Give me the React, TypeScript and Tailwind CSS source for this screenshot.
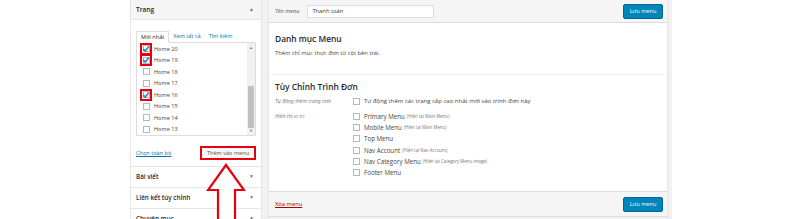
import React from 'react';

const Check = ({ checked }: { checked?: boolean }) => (
  <span className="relative flex h-[7px] w-[7px] shrink-0 items-center justify-center border border-[#b4b9be] bg-white">
    {checked && (
      <svg viewBox="0 0 10 10" className="absolute h-[8px] w-[8px]">
        <path d="M1.5 5.2 L4 7.6 L8.6 2" fill="none" stroke="#1e8cbe" strokeWidth="2" />
      </svg>
    )}
  </span>
);

const pages = [
  { name: 'Home 20', checked: true },
  { name: 'Home 19', checked: true },
  { name: 'Home 18' },
  { name: 'Home 17' },
  { name: 'Home 16', checked: true },
  { name: 'Home 15' },
  { name: 'Home 14' },
  { name: 'Home 13' },
];

const locations = [
  { name: 'Primary Menu', note: '(Hiện tại Main Menu)' },
  { name: 'Mobile Menu', note: '(Hiện tại Main Menu)' },
  { name: 'Top Menu' },
  { name: 'Nav Account', note: '(Hiện tại Nav Account)' },
  { name: 'Nav Category Menu', note: '(Hiện tại Category Menu image)' },
  { name: 'Footer Menu' },
];

const Caret = ({ up }: { up?: boolean }) => (
  <span className="text-[5px] text-[#72777c]">{up ? '▲' : '▼'}</span>
);

const LeftPanel = () => (
  <div className="relative flex h-[219px] w-[132px] shrink-0 flex-col overflow-hidden border-x border-[#e5e5e5] bg-white">
    <div className="flex h-[20px] shrink-0 items-center justify-between border-b border-[#e5e5e5] bg-[#f5f5f5] pl-[5px] pr-[7px]">
      <span className="text-[6.5px] font-semibold text-[#23282d]">Trang</span>
      <Caret up />
    </div>
    <div className="flex shrink-0 flex-col px-[5px] pt-[10px]">
      <div className="flex h-[12px] items-end text-[5.6px]">
        <span className="relative z-10 -mb-px flex h-[12px] items-center border border-b-white border-[#dddddd] bg-white px-[4px] text-[#23282d]">
          Mới nhất
        </span>
        <span className="ml-[4px] flex h-[12px] items-center text-[#0073aa]">Xem tất cả</span>
        <span className="ml-[8px] flex h-[12px] items-center text-[#0073aa]">Tìm kiếm</span>
      </div>
      <div className="flex h-[94px] border border-[#dddddd] bg-white">
        <div className="flex flex-1 flex-col">
          {pages.map((p) => (
            <div key={p.name} className="flex h-[11.5px] items-center pl-[6px]">
              <span className={p.checked ? 'relative flex h-[12px] w-[12px] -ml-[3px] items-center justify-center border-2 border-[#e8000b]' : 'flex h-[12px] w-[12px] -ml-[3px] items-center justify-center'}>
                <Check checked={p.checked} />
              </span>
              <span className="ml-[2px] text-[5.6px] text-[#444]">{p.name}</span>
            </div>
          ))}
        </div>
        <div className="flex w-[8px] flex-col items-center bg-[#f1f1f1]">
          <span className="mt-[2px] text-[4px] text-[#777]">▲</span>
          <div className="flex-1" />
          <div className="h-[42px] w-[6px] bg-[#c1c1c1]" />
          <span className="mb-[1px] text-[4px] text-[#777]">▼</span>
        </div>
      </div>
      <div className="mt-[10px] flex h-[14px] items-center justify-between">
        <span className="text-[5.6px] text-[#0073aa] underline">Chọn toàn bộ</span>
        <span className="flex h-[14px] w-[56px] items-center justify-center border-2 border-[#e8000b] bg-[#f7f7f7] text-[5.6px] text-[#555]">
          Thêm vào menu
        </span>
      </div>
    </div>
    <div className="mt-[6px] shrink-0 border-t border-[#e5e5e5]" />
    {['Bài viết', 'Liên kết tùy chỉnh', 'Chuyên mục'].map((t) => (
      <div key={t} className="flex h-[21px] shrink-0 items-center justify-between border-b border-[#e5e5e5] pl-[5px] pr-[7px]">
        <span className="text-[6.3px] font-semibold text-[#23282d]">{t}</span>
        <Caret />
      </div>
    ))}
    <svg className="absolute left-[75px] top-[163px] h-[60px] w-[40px]" viewBox="0 0 40 60">
      <path d="M20 2 L38 27 L29 27 L29 62 L12 62 L12 27 L2 27 Z" fill="white" stroke="#e8000b" strokeWidth="2.2" strokeLinejoin="miter" />
    </svg>
  </div>
);

const BlueButton = () => (
  <span className="flex h-[15px] w-[40px] items-center justify-center rounded-[2px] border border-[#006799] bg-[#0085ba] text-[5.6px] text-white">
    Lưu menu
  </span>
);

const RightPanel = () => (
  <div className="flex h-[219px] w-[400px] shrink-0 flex-col border-x border-[#e5e5e5] bg-white">
    <div className="flex h-[23px] shrink-0 items-center border-b border-[#dddddd] bg-[#f5f5f5] pl-[6px] pr-[4px]">
      <span className="text-[5.6px] italic text-[#555]">Tên menu</span>
      <span className="ml-[8px] flex h-[13px] w-[127px] items-center border border-[#dddddd] bg-white pl-[4px] text-[5.8px] text-[#32373c]">
        Thanh toán
      </span>
      <div className="flex-1" />
      <BlueButton />
    </div>
    <div className="flex flex-col px-[6px] pt-[10px]">
      <span className="text-[8.4px] font-semibold leading-[11px] text-[#23282d]">Danh mục Menu</span>
      <span className="mt-[5px] text-[5.8px] leading-[8px] text-[#444]">Thêm chỉ mục thực đơn từ cột bên trái.</span>
    </div>
    <div className="mx-[2px] mt-[17px] border-t border-[#eeeeee]" />
    <div className="flex flex-col px-[6px] pt-[6px]">
      <span className="text-[8.4px] font-semibold leading-[11px] text-[#23282d]">Tùy Chỉnh Trình Đơn</span>
      <div className="mt-[4px] flex h-[11px] items-center">
        <span className="w-[78px] text-[5.2px] italic text-[#777]">Tự động thêm trang tính</span>
        <Check />
        <span className="ml-[4px] text-[6px] text-[#444]">Tự động thêm các trang cấp cao nhất mới vào trình đơn này</span>
      </div>
      <div className="mt-[4px] flex">
        <span className="flex h-[11.2px] w-[78px] items-center text-[5.2px] italic text-[#777]">Hiển thị vị trí</span>
        <div className="flex flex-col">
          {locations.map((l) => (
            <div key={l.name} className="flex h-[11.2px] items-center">
              <Check />
              <span className="ml-[4px] text-[6.2px] text-[#444]">{l.name}</span>
              {l.note && <span className="ml-[2px] text-[4.4px] text-[#777]">{l.note}</span>}
            </div>
          ))}
        </div>
      </div>
    </div>
    <div className="flex-1" />
    <div className="flex h-[25px] shrink-0 items-center justify-between border-t border-[#dddddd] bg-[#f5f5f5] pl-[6px] pr-[4px]">
      <span className="text-[5.8px] text-[#a00] underline">Xóa menu</span>
      <BlueButton />
    </div>
    <div className="h-[3px] shrink-0 border-t border-[#dddddd] bg-[#f1f1f1]" />
  </div>
);

export default function App() {
  return (
    <div className="flex h-[219px] w-[800px] overflow-hidden bg-white font-['Open_Sans',sans-serif]">
      <div className="w-[130px] shrink-0" />
      <div className="flex shrink-0 bg-[#f1f1f1] pr-[4px]">
        <LeftPanel />
        <div className="w-[6px] shrink-0" />
        <RightPanel />
      </div>
    </div>
  );
}
